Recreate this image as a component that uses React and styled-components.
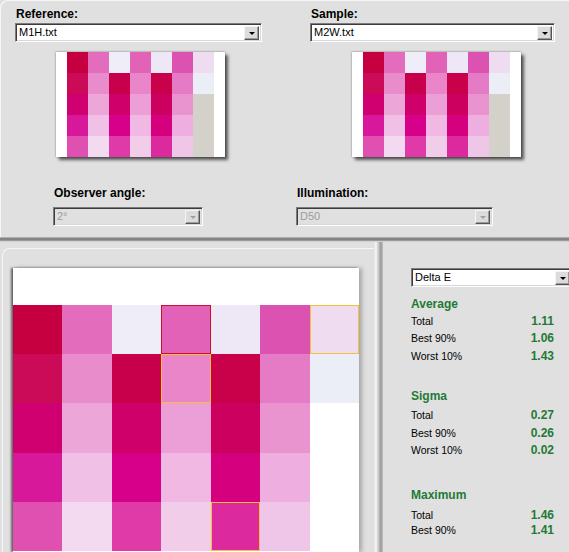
import React from 'react';
import styled, { createGlobalStyle } from 'styled-components';

const GlobalStyle = createGlobalStyle`
  html, body { margin: 0; padding: 0; background: #e0e0e0; }
  body {
    font-family: "Liberation Sans", Arial, sans-serif;
    font-size: 11px;
    color: #000;
    overflow: hidden;
  }
`;

// measured patch colours, row by row
const patches = [
  ['#c60040', '#e46cbc', '#efeef8', '#e262b8', '#eee8f6', '#dc52b0', '#efdcf0'],
  ['#cb0a58', '#e98ccc', '#c8004c', '#e985c8', '#c9004a', '#e47bc4', '#eceef7'],
  ['#d00070', '#eda6d8', '#d0006a', '#ec9ed6', '#cc005f', '#ea94cf', null],
  ['#d8189a', '#f0c0e6', '#d6008a', '#f0b8e2', '#d4007e', '#eeaedf', null],
  ['#e050b0', '#f3daf1', '#e03aa8', '#f1cdea', '#dc2a9e', '#f0c6e8', null],
];

const marks = {
  '0-3': '#c8102e',
  '0-6': '#f2c23c',
  '1-3': '#f2c23c',
  '4-4': '#f2c23c',
};

const stats = [
  { title: 'Average', gap: 8, lead: -1, rowH: 17.5, rows: [['Total', '1.11'], ['Best 90%', '1.06'], ['Worst 10%', '1.43']] },
  { title: 'Sigma', gap: 22, lead: 2, rowH: 17.5, rows: [['Total', '0.27'], ['Best 90%', '0.26'], ['Worst 10%', '0.02']] },
  { title: 'Maximum', gap: 27, lead: 3.5, rowH: 15, rows: [['Total', '1.46'], ['Best 90%', '1.41']] },
];

function Dropdown({ value, disabled, width }) {
  return (
    <Select $w={width} $disabled={disabled}>
      <SelectText $disabled={disabled}>{value}</SelectText>
      <ArrowButton>
        <Arrow $disabled={disabled} />
      </ArrowButton>
    </Select>
  );
}

function Thumbnail({ offset }) {
  return (
    <ThumbCard $offset={offset}>
      <ThumbGrid>
        {patches.map((row, r) =>
          row.map((c, i) => <ThumbPatch key={`${r}-${i}`} $c={c || '#d4d1ca'} />)
        )}
      </ThumbGrid>
    </ThumbCard>
  );
}

function StatBlock({ block }) {
  return (
    <Section $gap={block.gap}>
      <SectionTitle>{block.title}</SectionTitle>
      <SectionRows $lead={block.lead}>
        {block.rows.map(([k, v]) => (
          <StatRow key={k} $h={block.rowH}>
            <StatName>{k}</StatName>
            <StatValue>{v}</StatValue>
          </StatRow>
        ))}
      </SectionRows>
    </Section>
  );
}

export default function App() {
  return (
    <Window>
      <GlobalStyle />
      <TopPanel>
        <FileRow>
          <Field $w={247}>
            <Label>Reference:</Label>
            <Dropdown value="M1H.txt" width={247} />
            <Thumbnail offset={41} />
          </Field>
          <Field $w={245}>
            <Label>Sample:</Label>
            <Dropdown value="M2W.txt" width={245} />
            <Thumbnail offset={42} />
          </Field>
        </FileRow>
        <OptionRow>
          <Field $w={150}>
            <Label>Observer angle:</Label>
            <OptionSelect>
              <Dropdown value="2°" width={150} disabled />
            </OptionSelect>
          </Field>
          <Field $w={197}>
            <Label>Illumination:</Label>
            <OptionSelect>
              <Dropdown value="D50" width={197} disabled />
            </OptionSelect>
          </Field>
        </OptionRow>
      </TopPanel>
      <HSplitter />
      <BottomArea>
        <ViewPane>
          <ViewFrame>
            <Canvas>
              <PatchGrid>
                {patches.map((row, r) =>
                  row.map((c, i) => (
                    <Patch key={`${r}-${i}`} $c={c || '#ffffff'} $mark={marks[`${r}-${i}`]} />
                  ))
                )}
              </PatchGrid>
            </Canvas>
          </ViewFrame>
        </ViewPane>
        <VSplitter />
        <StatsPane>
          <Dropdown value="Delta E" width={162} />
          {stats.map((b) => (
            <StatBlock key={b.title} block={b} />
          ))}
        </StatsPane>
      </BottomArea>
    </Window>
  );
}

const Window = styled.div`
  width: 569px;
  height: 552px;
  overflow: hidden;
  display: flex;
  flex-direction: column;
  background: #e0e0e0;
`;

const TopPanel = styled.div`
  height: 237px;
  box-sizing: border-box;
  padding-top: 7px;
  border-top-left-radius: 8px;
  box-shadow: inset 1px 1px 0 #f6f6f6;
  background: #e0e0e0;
`;

const FileRow = styled.div`
  display: flex;
  gap: 48px;
  padding-left: 15px;
`;

const OptionRow = styled.div`
  display: flex;
  gap: 93px;
  padding-left: 53px;
  margin-top: 29px;
`;

const Field = styled.div`
  width: ${(p) => p.$w}px;
  display: flex;
  flex-direction: column;
`;

const Label = styled.div`
  font-weight: bold;
  font-size: 12px;
  line-height: 14px;
  height: 14px;
  margin-left: 1px;
  margin-bottom: 2px;
`;

const OptionSelect = styled.div`
  margin-top: 5px;
`;

const Select = styled.div`
  width: ${(p) => p.$w}px;
  height: 19px;
  box-sizing: border-box;
  display: flex;
  align-items: center;
  justify-content: space-between;
  background: ${(p) => (p.$disabled ? '#e0e0e0' : '#ffffff')};
  border: 1px solid;
  border-color: #7c7c7c #ffffff #ffffff #7c7c7c;
  box-shadow: inset 1px 1px 0 #3c3c3c, inset -1px -1px 0 #d8d8d8;
  padding: 2px 2px 2px 2px;
  flex-shrink: 0;
`;

const SelectText = styled.span`
  font-size: 11px;
  line-height: 13px;
  padding-left: 1px;
  color: ${(p) => (p.$disabled ? '#9c9c9c' : '#000')};
  white-space: nowrap;
`;

const ArrowButton = styled.div`
  width: 15px;
  height: 14px;
  box-sizing: border-box;
  background: #dcdcdc;
  border: 1px solid;
  border-color: #f4f4f4 #555 #555 #f4f4f4;
  box-shadow: inset -1px -1px 0 #9a9a9a;
  display: flex;
  align-items: center;
  justify-content: center;
`;

const Arrow = styled.div`
  width: 0;
  height: 0;
  margin-top: 2px;
  border-left: 3px solid transparent;
  border-right: 3px solid transparent;
  border-top: 3px solid ${(p) => (p.$disabled ? '#a0a0a0' : '#000')};
`;

const ThumbCard = styled.div`
  width: 169px;
  height: 105px;
  box-sizing: border-box;
  margin-top: 10px;
  margin-left: ${(p) => p.$offset}px;
  padding: 0 11px;
  background: #fff;
  box-shadow: 0 0 2px rgba(0, 0, 0, 0.45), 3px 3px 3px rgba(0, 0, 0, 0.6);
`;

const ThumbGrid = styled.div`
  display: grid;
  grid-template-columns: repeat(7, 21px);
  grid-auto-rows: 21px;
`;

const ThumbPatch = styled.div`
  background: ${(p) => p.$c};
`;

const HSplitter = styled.div`
  height: 5px;
  flex-shrink: 0;
  background: linear-gradient(to bottom, #c4c4c4 0%, #7a7a7a 35%, #8e8e8e 65%, #ececec 100%);
`;

const BottomArea = styled.div`
  flex: 1;
  display: flex;
  min-height: 0;
`;

const ViewPane = styled.div`
  width: 374px;
  flex-shrink: 0;
  box-sizing: border-box;
  padding: 6px 0 0 2px;
  overflow: hidden;
`;

const ViewFrame = styled.div`
  height: 100%;
  box-sizing: border-box;
  padding: 19px 0 0 10px;
  border-top-left-radius: 8px;
  border-top: 1px solid #f6f6f6;
  border-left: 1px solid #f6f6f6;
`;

const Canvas = styled.div`
  width: 346px;
  height: 100%;
  box-sizing: border-box;
  padding-top: 37px;
  background: #fff;
  box-shadow: -2px 0 2px rgba(0, 0, 0, 0.55), 3px 0 4px rgba(0, 0, 0, 0.25);
`;

const PatchGrid = styled.div`
  display: grid;
  grid-template-columns: repeat(7, 1fr);
  grid-auto-rows: 49.2px;
`;

const Patch = styled.div`
  background: ${(p) => p.$c};
  box-shadow: ${(p) => (p.$mark ? `inset 0 0 0 1px ${p.$mark}` : 'none')};
`;

const VSplitter = styled.div`
  width: 9px;
  flex-shrink: 0;
  background: linear-gradient(to right, #e4e4e4 0%, #f6f6f6 22%, #d0d0d0 45%, #9a9a9a 75%, #c0c0c0 100%);
`;

const StatsPane = styled.div`
  flex: 1;
  box-sizing: border-box;
  padding: 26px 0 0 28px;
  overflow: hidden;
  display: flex;
  flex-direction: column;
`;

const Section = styled.div`
  margin-top: ${(p) => p.$gap}px;
  width: 143px;
`;

const SectionTitle = styled.div`
  font-weight: bold;
  font-size: 12px;
  line-height: 18px;
  height: 18px;
  color: #1f7a36;
`;

const SectionRows = styled.div`
  margin-top: ${(p) => p.$lead}px;
`;

const StatRow = styled.div`
  display: flex;
  justify-content: space-between;
  align-items: center;
  height: ${(p) => p.$h}px;
`;

const StatName = styled.span`
  font-size: 10.5px;
`;

const StatValue = styled.span`
  font-weight: bold;
  font-size: 12px;
  color: #1f7a36;
`;
